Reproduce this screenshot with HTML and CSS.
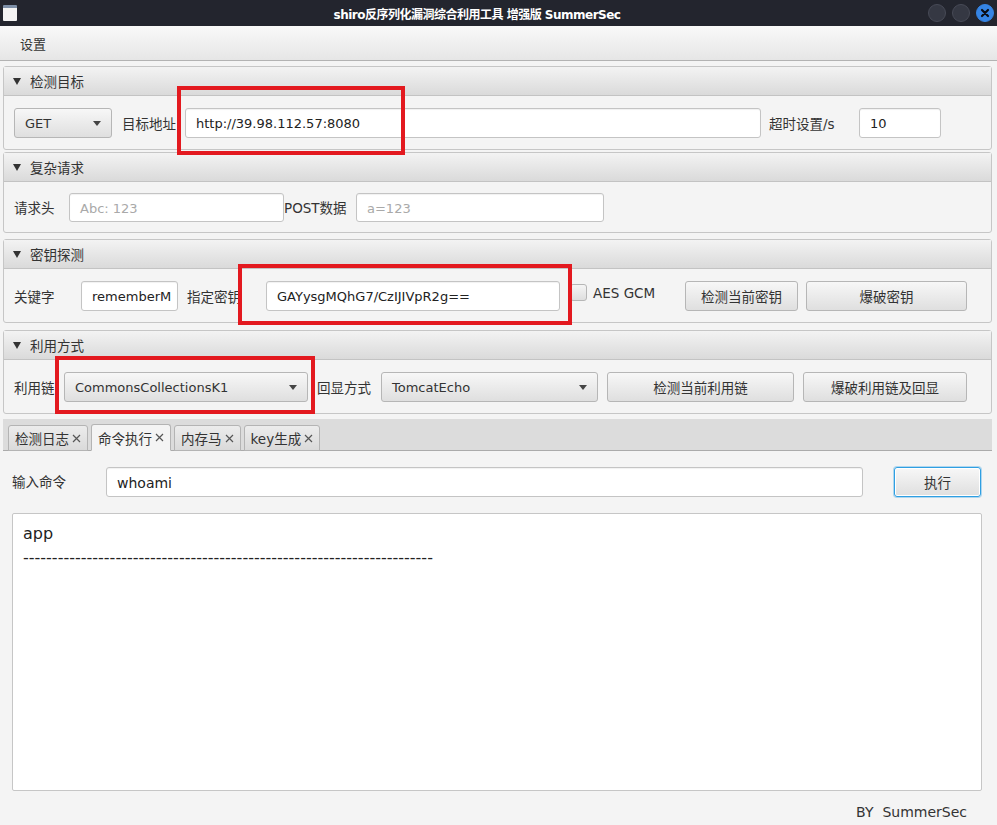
FILE: index.html
```html
<!DOCTYPE html>
<html lang="zh-CN">
<head>
    <meta charset="UTF-8">
    <title>shiro反序列化漏洞综合利用工具 增强版 SummerSec</title>
    <link rel="stylesheet" href="styles.css">
</head>
<body>
    <div class="titlebar">
        <div class="app-icon"></div>
        <div class="title">shiro反序列化漏洞综合利用工具 增强版 SummerSec</div>
        <div class="win-buttons">
            <span class="win-btn"></span>
            <span class="win-btn"></span>
            <span class="win-btn close">
                <svg width="10" height="10" viewBox="0 0 10 10"><path d="M2 2 L8 8 M8 2 L2 8" stroke="#0b0d14" stroke-width="2.2" stroke-linecap="round"/></svg>
            </span>
        </div>
    </div>

    <div class="menubar">
        <span class="menu-item">设置</span>
    </div>

    <div class="main">
        <div class="pane pane-target">
            <div class="pane-head"><span class="arrow"></span>检测目标</div>
            <div class="pane-body">
                <div class="combo w-get">GET<span class="combo-arrow"></span></div>
                <span class="label lbl-url">目标地址</span>
                <div class="input w-url">http://39.98.112.57:8080</div>
                <span class="label lbl-timeout">超时设置/s</span>
                <div class="input w-timeout">10</div>
            </div>
        </div>

        <div class="pane pane-request">
            <div class="pane-head"><span class="arrow"></span>复杂请求</div>
            <div class="pane-body short">
                <span class="label lbl-header">请求头</span>
                <div class="input placeholder w-header">Abc: 123</div>
                <span class="label lbl-post">POST数据</span>
                <div class="input placeholder w-post">a=123</div>
            </div>
        </div>

        <div class="pane pane-key">
            <div class="pane-head"><span class="arrow"></span>密钥探测</div>
            <div class="pane-body">
                <span class="label lbl-keyword">关键字</span>
                <div class="input w-keyword">rememberM</div>
                <span class="label lbl-key">指定密钥</span>
                <div class="input w-key">GAYysgMQhG7/CzIJIVpR2g==</div>
                <span class="checkbox"></span>
                <span class="label lbl-gcm">AES GCM</span>
                <div class="button w-check-key">检测当前密钥</div>
                <div class="button w-brute-key">爆破密钥</div>
            </div>
        </div>

        <div class="pane pane-gadget">
            <div class="pane-head"><span class="arrow"></span>利用方式</div>
            <div class="pane-body">
                <span class="label lbl-gadget">利用链</span>
                <div class="combo w-gadget">CommonsCollectionsK1<span class="combo-arrow"></span></div>
                <span class="label lbl-echo">回显方式</span>
                <div class="combo w-echo">TomcatEcho<span class="combo-arrow"></span></div>
                <div class="button w-check-gadget">检测当前利用链</div>
                <div class="button w-brute-gadget">爆破利用链及回显</div>
            </div>
        </div>

        <div class="tabs">
            <div class="tab-header">
                <div class="tab">检测日志<span class="tab-close"><svg width="9" height="9" viewBox="0 0 9 9"><path d="M1 1 L8 8 M8 1 L1 8" stroke="#555" stroke-width="1.2"/></svg></span></div>
                <div class="tab selected">命令执行<span class="tab-close"><svg width="9" height="9" viewBox="0 0 9 9"><path d="M1 1 L8 8 M8 1 L1 8" stroke="#555" stroke-width="1.2"/></svg></span></div>
                <div class="tab">内存马<span class="tab-close"><svg width="9" height="9" viewBox="0 0 9 9"><path d="M1 1 L8 8 M8 1 L1 8" stroke="#555" stroke-width="1.2"/></svg></span></div>
                <div class="tab">key生成<span class="tab-close"><svg width="9" height="9" viewBox="0 0 9 9"><path d="M1 1 L8 8 M8 1 L1 8" stroke="#555" stroke-width="1.2"/></svg></span></div>
            </div>
            <div class="tab-content">
                <div class="cmd-row">
                    <span class="label lbl-cmd">输入命令</span>
                    <div class="input w-cmd">whoami</div>
                    <div class="button focused w-exec">执行</div>
                </div>
                <div class="output">
                    <div>app</div>
                    <div>-----------------------------------------------------------------------</div>
                </div>
            </div>
        </div>
    </div>

    <div class="footer">BY&nbsp;&nbsp;SummerSec</div>

    <div class="mark mark-url"></div>
    <div class="mark mark-key"></div>
    <div class="mark mark-gadget"></div>
</body>
</html>
```

FILE: styles.css
```css
* {
    margin: 0;
    padding: 0;
    box-sizing: border-box;
}

html, body {
    width: 997px;
    height: 825px;
    overflow: hidden;
}

body {
    position: relative;
    background: #f4f4f4;
    font-family: "DejaVu Sans", "Noto Sans CJK SC", sans-serif;
    font-size: 13px;
    color: #333;
}

/* window title bar */
.titlebar {
    height: 26px;
    background: #23252e;
    display: flex;
    align-items: center;
    position: relative;
}

.app-icon {
    width: 14px;
    height: 16px;
    margin-left: 3px;
    background: #f4f4f4;
    border-top: 3px solid #7d8fa8;
    border-radius: 1px;
}

.title {
    flex: 1;
    text-align: center;
    color: #fff;
    font-size: 12px;
    font-weight: bold;
    letter-spacing: -0.5px;
    padding-left: 9px;
}

.win-buttons {
    display: flex;
    gap: 6px;
    margin-right: 3px;
}

.win-btn {
    width: 18px;
    height: 18px;
    border-radius: 50%;
    background: #353843;
    border: 1px solid #474a56;
    display: flex;
    align-items: center;
    justify-content: center;
}

.win-btn.close {
    background: #3584e4;
    border-color: #3584e4;
}

/* menu */
.menubar {
    height: 35px;
    background: linear-gradient(#f9f9f9, #e6e6e6);
    border-bottom: 1px solid #b3b3b3;
    display: flex;
    align-items: center;
    padding-left: 20px;
}

.main {
    padding: 0 5px 0 3px;
}

/* titled panes */
.pane {
    border: 1px solid #c6c6c6;
    border-radius: 3px;
}

.pane-target { margin-top: 5px; }
.pane-request { margin-top: 2px; }
.pane-key { margin-top: 6px; }
.pane-gadget { margin-top: 7px; }

.pane-head {
    height: 29px;
    background: linear-gradient(#f3f3f3, #dadada);
    border-bottom: 1px solid #c3c3c3;
    display: flex;
    align-items: center;
    padding-left: 9px;
    font-size: 13.5px;
}

.arrow {
    width: 0;
    height: 0;
    border-left: 4.5px solid transparent;
    border-right: 4.5px solid transparent;
    border-top: 7px solid #333;
    margin-right: 9px;
}

.pane-body {
    height: 53px;
    display: flex;
    align-items: center;
    padding-left: 10px;
}

.pane-body.short {
    height: 50px;
}

/* controls */
.label {
    flex-shrink: 0;
    white-space: nowrap;
    font-size: 13.5px;
}

.input {
    flex-shrink: 0;
    height: 30px;
    padding-top: 2px;
    background: #fff;
    border: 1px solid #c4c4c4;
    border-radius: 3px;
    box-shadow: inset 0 1px 1px rgba(0, 0, 0, 0.06);
    display: flex;
    align-items: center;
    padding-left: 10px;
    white-space: nowrap;
    overflow: hidden;
    color: #222;
}

.input.placeholder {
    color: #a9a9a9;
    height: 29px;
}

.combo,
.button {
    flex-shrink: 0;
    height: 30px;
    background: linear-gradient(#f7f7f7, #dfdfdf);
    border: 1px solid #b6b6b6;
    border-radius: 3px;
    display: flex;
    align-items: center;
    white-space: nowrap;
    color: #333;
}

.combo {
    padding: 2px 10px 0;
    justify-content: space-between;
}

.combo-arrow {
    width: 0;
    height: 0;
    border-left: 4.5px solid transparent;
    border-right: 4.5px solid transparent;
    border-top: 5px solid #444;
}

.button {
    justify-content: center;
    font-size: 13.5px;
}

.button.focused {
    border: 1px solid #2f9fe2;
    box-shadow: 0 0 0 1px rgba(47, 159, 226, 0.35), inset 0 0 0 1px #fff;
}

.checkbox {
    flex-shrink: 0;
    width: 17px;
    height: 17px;
    margin-left: 10px;
    margin-top: -6px;
    background: linear-gradient(#f5f5f5, #dedede);
    border: 1px solid #b6b6b6;
    border-radius: 3px;
}

/* row 1 */
.w-get { width: 98px; }
.lbl-url { margin-left: 10px; width: 63px; }
.w-url { width: 576px; }
.lbl-timeout { margin-left: 8px; width: 90px; }
.w-timeout { width: 82px; }

/* row 2 */
.lbl-header { width: 55px; }
.w-header { width: 215px; }
.lbl-post { width: 72px; }
.w-post { width: 248px; }

/* row 3 */
.lbl-keyword { width: 67px; }
.w-keyword { width: 97px; }
.lbl-key { margin-left: 9px; width: 79px; }
.w-key { width: 294px; }
.lbl-gcm { margin-left: 6px; margin-top: -6px; width: 92px; }
.w-check-key { width: 113px; }
.w-brute-key { margin-left: 8px; width: 161px; }

/* row 4 */
.lbl-gadget { width: 50px; }
.w-gadget { width: 244px; }
.lbl-echo { margin-left: 9px; width: 64px; }
.w-echo { width: 217px; }
.w-check-gadget { margin-left: 9px; width: 187px; }
.w-brute-gadget { margin-left: 9px; width: 164px; }

/* tab pane */
.tabs {
    margin-top: 5px;
}

.tab-header {
    height: 32px;
    background: #dcdcdc;
    border-bottom: 1px solid #ababab;
    display: flex;
    align-items: flex-end;
    gap: 3px;
    padding-left: 5px;
}

.tab {
    height: 26px;
    margin-bottom: -1px;
    padding: 0 6px;
    background: linear-gradient(#ececec, #dadada);
    border: 1px solid #b4b4b4;
    border-radius: 3px 3px 0 0;
    display: flex;
    align-items: center;
    gap: 3px;
    font-size: 13.5px;
}

.tab.selected {
    background: #f4f4f4;
    border-bottom-color: #f4f4f4;
    height: 27px;
}

.tab-close {
    display: flex;
    align-items: center;
}

.tab-content {
    padding: 16px 10px 0 9px;
}

.cmd-row {
    display: flex;
    align-items: center;
}

.lbl-cmd {
    width: 94px;
    margin-top: -2px;
}

.w-cmd {
    width: 757px;
    font-size: 14px;
}

.w-exec {
    margin-left: 31px;
    width: 87px;
}

.output {
    margin-top: 16px;
    height: 278px;
    background: #fff;
    border: 1px solid #c6c6c6;
    border-radius: 2px;
    padding: 8px 10px;
    font-size: 16px;
    line-height: 24px;
    color: #222;
    white-space: nowrap;
    overflow: hidden;
}

.footer {
    text-align: right;
    padding: 13px 30px 0 0;
    font-size: 14px;
    color: #333;
}

/* red annotation boxes drawn over the screenshot */
.mark {
    position: absolute;
    border: 4px solid #e3191f;
    pointer-events: none;
}

.mark-url { left: 177px; top: 86px; width: 228px; height: 69px; }
.mark-key { left: 238px; top: 264px; width: 334px; height: 61px; }
.mark-gadget { left: 55px; top: 356px; width: 260px; height: 58px; }
```
